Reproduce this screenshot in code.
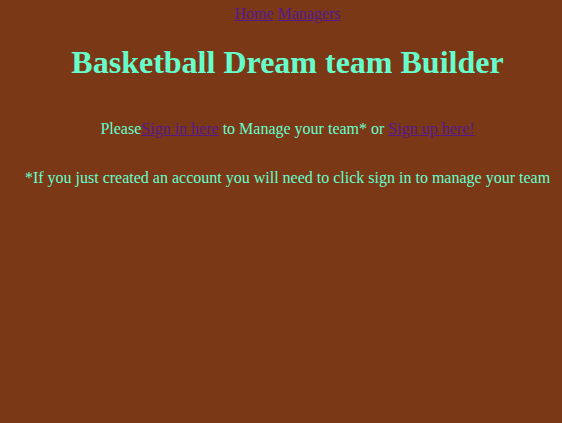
import React from 'react';

const App = () => {
    return (
        <div className="min-h-[423px] bg-[#7a3817] pl-[13px] text-center text-[16px] text-[#66ffcc] font-['Liberation_Serif',serif]">
            <nav className="pt-[5px] leading-[18px]">
                <a href="#" className="text-[#551a8b] underline">Home</a>{' '}
                <a href="#" className="text-[#551a8b] underline">Managers</a>
            </nav>
            <h1 className="mt-[21px] mb-[21px] text-[32px] leading-[37px] font-bold">
                Basketball Dream team Builder
            </h1>
            <p className="mt-[39px] leading-[18px]">
                Please<a href="#" className="text-[#551a8b] underline">Sign in here</a> to Manage your team* or{' '}
                <a href="#" className="text-[#551a8b] underline">Sign up here!</a>
            </p>
            <p className="mt-[31px] leading-[18px]">
                *If you just created an account you will need to click sign in to manage your team
            </p>
        </div>
    );
};

export default App;
